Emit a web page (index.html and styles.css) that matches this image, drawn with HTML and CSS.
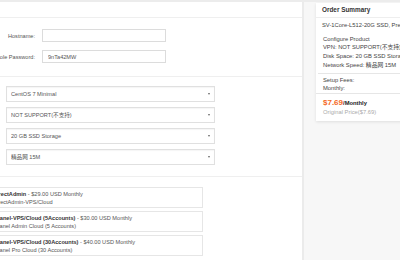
FILE: index.html
```html
<!DOCTYPE html>
<html lang="en">
<head>
    <meta charset="UTF-8">
    <meta name="viewport" content="width=device-width, initial-scale=1.0">
    <title>Configure</title>
    <link rel="stylesheet" href="styles.css">
</head>
<body>
    <div class="page">
        <div class="main">
            <div class="section top"></div>

            <!-- server settings -->
            <div class="section server">
                <div class="field">
                    <label for="hostname">Hostname:</label>
                    <input type="text" id="hostname">
                </div>
                <div class="field">
                    <label for="rootpw">Console Password:</label>
                    <input type="text" id="rootpw" value="9nTa42MW">
                </div>
            </div>

            <!-- configurable options -->
            <div class="section options">
                <div class="select-wrap"><select><option>CentOS 7 Minimal</option></select></div>
                <div class="select-wrap"><select><option>NOT SUPPORT(不支持)</option></select></div>
                <div class="select-wrap"><select><option>20 GB SSD Storage</option></select></div>
                <div class="select-wrap"><select><option>精品网 15M</option></select></div>
            </div>

            <!-- addons -->
            <div class="section addons">
                <div class="addon">
                    <div><b>DirectAdmin</b> - $29.00 USD Monthly</div>
                    <div>DirectAdmin-VPS/Cloud</div>
                </div>
                <div class="addon">
                    <div><b>cPanel-VPS/Cloud (5Accounts)</b> - $30.00 USD Monthly</div>
                    <div>cPanel Admin Cloud (5 Accounts)</div>
                </div>
                <div class="addon">
                    <div><b>cPanel-VPS/Cloud (30Accounts)</b> - $40.00 USD Monthly</div>
                    <div>cPanel Pro Cloud (30 Accounts)</div>
                </div>
            </div>
        </div>

        <div class="side">
            <div class="summary">
                <div class="summary-head">Order Summary</div>
                <div class="summary-body">
                    <div class="product">SV-1Core-L512-20G SSD, Premium</div>
                    <div class="config">
                        <div>Configure Product</div>
                        <div>VPN: NOT SUPPORT(不支持)</div>
                        <div>Disk Space: 20 GB SSD Storage</div>
                        <div>Network Speed: 精品网 15M</div>
                    </div>
                </div>
                <div class="summary-fees">
                    <div>Setup Fees:</div>
                    <div>Monthly:</div>
                </div>
                <div class="summary-total">
                    <div><span class="price">$7.69</span><b>/Monthly</b></div>
                    <div class="original">Original Price($7.69)</div>
                </div>
            </div>
        </div>
    </div>
</body>
</html>
```

FILE: styles.css
```css
body {
    font-family: "Liberation Sans", "Noto Sans CJK SC", sans-serif;
    font-size: 5.6px;
    color: #555;
    background-color: #f7f7f7;
    margin: 0;
    padding: 0;
    overflow: hidden;
}
.page {
    display: flex;
    border-top: 2px solid #ececec;
    height: 258px;
}
.main {
    width: 302px;
    flex-shrink: 0;
    background-color: #fff;
    border-right: 2px solid #ebebeb;
    overflow: hidden;
}
.section {
    border-bottom: 1px solid #efefef;
}
.section.top {
    height: 15px;
}
.server {
    padding: 11px 0 13px;
}
.field {
    display: flex;
    align-items: center;
    gap: 7px;
    margin-left: -40px;
}
.field + .field {
    margin-top: 8px;
}
.field label {
    width: 75px;
    text-align: right;
    white-space: nowrap;
}
.field input {
    box-sizing: border-box;
    width: 124px;
    height: 13px;
    border: 1px solid #dcdcdc;
    padding: 0 5px;
    font-family: inherit;
    font-size: 5.6px;
    color: #555;
    outline: none;
}
.options {
    padding: 9px 0 11px 6px;
}
.select-wrap {
    position: relative;
    width: 209px;
}
.select-wrap + .select-wrap {
    margin-top: 5px;
}
.select-wrap select {
    appearance: none;
    -webkit-appearance: none;
    box-sizing: border-box;
    width: 100%;
    height: 16px;
    border: 1px solid #e0e0e0;
    border-radius: 0;
    background-color: #fff;
    box-shadow: inset 0 1px 1px rgba(0, 0, 0, 0.04);
    padding: 0 4px;
    font-family: inherit;
    font-size: 5.6px;
    color: #555;
}
.select-wrap::after {
    content: "";
    position: absolute;
    right: 5px;
    top: 7px;
    border-left: 1.5px solid transparent;
    border-right: 1.5px solid transparent;
    border-top: 2px solid #666;
}
.addons {
    border-bottom: none;
    padding-top: 10px;
}
.addon {
    box-sizing: border-box;
    width: 223px;
    height: 21px;
    margin-left: -20px;
    border: 1px solid #e6e6e6;
    padding: 1.5px 0 0 12px;
    line-height: 8px;
    color: #555;
    white-space: nowrap;
}
.addon + .addon {
    margin-top: 3px;
}
.addon b {
    color: #333;
}
.side {
    flex: 1;
    padding: 1px 0 0 12px;
    overflow: hidden;
}
.summary {
    width: 140px;
    background-color: #fff;
    box-shadow: 0 1px 3px rgba(0, 0, 0, 0.1);
    color: #444;
    font-size: 5.8px;
    white-space: nowrap;
    padding-bottom: 4px;
}
.summary-head {
    height: 14px;
    line-height: 14px;
    padding-left: 6px;
    font-size: 6.4px;
    font-weight: bold;
    color: #333;
    border-bottom: 1px solid #eee;
}
.summary-body {
    margin-left: 2px;
    padding: 3px 0 3px 4px;
    line-height: 8.7px;
    border-bottom: 1px solid #e6e6e6;
}
.config {
    margin-top: 5px;
    padding-left: 1px;
}
.summary-fees {
    padding: 2px 0 0 7px;
    line-height: 8.7px;
    border-bottom: 1px solid #e6e6e6;
}
.summary-total {
    padding: 3px 0 0 7px;
}
.summary-total b {
    color: #222;
    font-size: 5.8px;
}
.price {
    font-size: 8px;
    font-weight: bold;
    color: #f5691e;
    line-height: 11px;
}
.original {
    color: #aaa;
    line-height: 9px;
}
```
